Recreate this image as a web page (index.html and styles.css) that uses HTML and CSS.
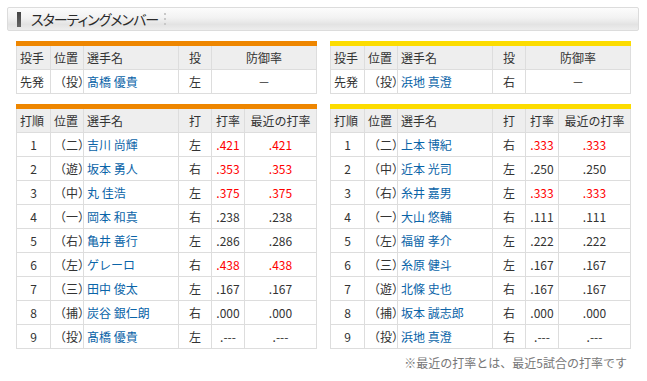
FILE: index.html
```html
<!DOCTYPE html>
<html lang="ja">
<head>
<meta charset="utf-8">
<link rel="stylesheet" href="styles.css">
</head>
<body>
<div class="page">
  <div class="title-box">
    <span class="title-bar"></span>
    <span class="title-text">スターティングメンバー</span>
    <span class="title-dots"><i></i><i></i><i></i></span>
  </div>
  <div class="teams">
    <div class="team">
      <table class="tbl pitcher orange">
        <colgroup><col class="c1"><col class="c2"><col class="c3"><col class="c4"><col class="c5w"></colgroup>
        <tr class="head"><th>投手</th><th>位置</th><th>選手名</th><th class="ctr">投</th><th class="ctr">防御率</th></tr>
        <tr><td>先発</td><td>（投）</td><td class="name">髙橋 優貴</td><td class="ctr">左</td><td class="ctr">－</td></tr>
      </table>
      <table class="tbl orange">
        <colgroup><col class="c1"><col class="c2"><col class="c3"><col class="c4"><col class="c5"><col class="c6"></colgroup>
        <tr class="head"><th>打順</th><th>位置</th><th>選手名</th><th class="ctr">打</th><th class="ctr">打率</th><th class="ctr">最近の打率</th></tr>
        <tr><td class="ctr">1</td><td>（二）</td><td class="name">吉川 尚輝</td><td class="ctr">左</td><td class="ctr red">.421</td><td class="ctr red">.421</td></tr>
        <tr><td class="ctr">2</td><td>（遊）</td><td class="name">坂本 勇人</td><td class="ctr">右</td><td class="ctr red">.353</td><td class="ctr red">.353</td></tr>
        <tr><td class="ctr">3</td><td>（中）</td><td class="name">丸 佳浩</td><td class="ctr">左</td><td class="ctr red">.375</td><td class="ctr red">.375</td></tr>
        <tr><td class="ctr">4</td><td>（一）</td><td class="name">岡本 和真</td><td class="ctr">右</td><td class="ctr">.238</td><td class="ctr">.238</td></tr>
        <tr><td class="ctr">5</td><td>（右）</td><td class="name">亀井 善行</td><td class="ctr">左</td><td class="ctr">.286</td><td class="ctr">.286</td></tr>
        <tr><td class="ctr">6</td><td>（左）</td><td class="name">ゲレーロ</td><td class="ctr">右</td><td class="ctr red">.438</td><td class="ctr red">.438</td></tr>
        <tr><td class="ctr">7</td><td>（三）</td><td class="name">田中 俊太</td><td class="ctr">左</td><td class="ctr">.167</td><td class="ctr">.167</td></tr>
        <tr><td class="ctr">8</td><td>（捕）</td><td class="name">炭谷 銀仁朗</td><td class="ctr">右</td><td class="ctr">.000</td><td class="ctr">.000</td></tr>
        <tr><td class="ctr">9</td><td>（投）</td><td class="name">髙橋 優貴</td><td class="ctr">左</td><td class="ctr">.---</td><td class="ctr">.---</td></tr>
      </table>
    </div>
    <div class="team">
      <table class="tbl pitcher yellow">
        <colgroup><col class="c1"><col class="c2"><col class="c3"><col class="c4"><col class="c5w"></colgroup>
        <tr class="head"><th>投手</th><th>位置</th><th>選手名</th><th class="ctr">投</th><th class="ctr">防御率</th></tr>
        <tr><td>先発</td><td>（投）</td><td class="name">浜地 真澄</td><td class="ctr">右</td><td class="ctr">－</td></tr>
      </table>
      <table class="tbl yellow">
        <colgroup><col class="c1"><col class="c2"><col class="c3"><col class="c4"><col class="c5"><col class="c6"></colgroup>
        <tr class="head"><th>打順</th><th>位置</th><th>選手名</th><th class="ctr">打</th><th class="ctr">打率</th><th class="ctr">最近の打率</th></tr>
        <tr><td class="ctr">1</td><td>（二）</td><td class="name">上本 博紀</td><td class="ctr">右</td><td class="ctr red">.333</td><td class="ctr red">.333</td></tr>
        <tr><td class="ctr">2</td><td>（中）</td><td class="name">近本 光司</td><td class="ctr">左</td><td class="ctr">.250</td><td class="ctr">.250</td></tr>
        <tr><td class="ctr">3</td><td>（右）</td><td class="name">糸井 嘉男</td><td class="ctr">左</td><td class="ctr red">.333</td><td class="ctr red">.333</td></tr>
        <tr><td class="ctr">4</td><td>（一）</td><td class="name">大山 悠輔</td><td class="ctr">右</td><td class="ctr">.111</td><td class="ctr">.111</td></tr>
        <tr><td class="ctr">5</td><td>（左）</td><td class="name">福留 孝介</td><td class="ctr">左</td><td class="ctr">.222</td><td class="ctr">.222</td></tr>
        <tr><td class="ctr">6</td><td>（三）</td><td class="name">糸原 健斗</td><td class="ctr">左</td><td class="ctr">.167</td><td class="ctr">.167</td></tr>
        <tr><td class="ctr">7</td><td>（遊）</td><td class="name">北條 史也</td><td class="ctr">右</td><td class="ctr">.167</td><td class="ctr">.167</td></tr>
        <tr><td class="ctr">8</td><td>（捕）</td><td class="name">坂本 誠志郎</td><td class="ctr">右</td><td class="ctr">.000</td><td class="ctr">.000</td></tr>
        <tr><td class="ctr">9</td><td>（投）</td><td class="name">浜地 真澄</td><td class="ctr">右</td><td class="ctr">.---</td><td class="ctr">.---</td></tr>
      </table>
      <p class="note">※最近の打率とは、最近5試合の打率です</p>
    </div>
  </div>
</div>
</body>
</html>
```

FILE: styles.css
```css
html, body {
  margin: 0;
  padding: 0;
  background: #ffffff;
}
body {
  font-family: "Noto Sans CJK JP", "Noto Sans", sans-serif;
  color: #333333;
  font-size: 12px;
}
.page {
  padding: 7px 0 0 7px;
}
.title-box {
  width: 630px;
  height: 22px;
  border: 1px solid #dcdcdc;
  border-radius: 2px;
  background: linear-gradient(#fcfcfc 0%, #f2f2f2 45%, #e3e3e3 75%, #ededed 100%);
  display: flex;
  align-items: center;
}
.title-bar {
  width: 4px;
  height: 15px;
  margin-left: 9px;
  background: linear-gradient(#444, #666);
}
.title-text {
  margin-left: 10px;
  font-size: 14px;
  font-feature-settings: "palt";
  color: #2a2a2a;
  letter-spacing: -1px;
}
.title-dots {
  margin-left: 6px;
  display: flex;
  flex-direction: column;
  gap: 3px;
}
.title-dots i {
  display: block;
  width: 2px;
  height: 2px;
  background: #c8c8c8;
}
.teams {
  display: flex;
  gap: 14px;
  margin-top: 10px;
  padding-left: 9px;
}
.team {
  width: 300px;
  display: flex;
  flex-direction: column;
  gap: 10px;
}
.tbl {
  width: 300px;
  table-layout: fixed;
  border-collapse: collapse;
}
.tbl.orange { border-top: 5px solid #ee8600; }
.tbl.yellow { border-top: 5px solid #fcdc00; }
.c1 { width: 34px; }
.c2 { width: 33px; }
.c3 { width: 95px; }
.c4 { width: 33px; }
.c5 { width: 33px; }
.c5w { width: 105px; }
.c6 { width: 72px; }
.tbl th, .tbl td {
  border: 1px solid #dddddd;
  height: 23px;
  padding: 0 3px;
  font-weight: normal;
  text-align: left;
  white-space: nowrap;
  line-height: 14px;
  font-size: 12px;
  color: #333333;
}
.tbl .head th {
  background: #eeeeee;
}
.tbl .ctr { text-align: center; }
.tbl td.name { color: #0a64a8; }
.tbl td.red { color: #ff0000; }
.note {
  margin: -5px 3px 0 0;
  text-align: right;
  color: #777777;
  font-size: 12px;
}
```
